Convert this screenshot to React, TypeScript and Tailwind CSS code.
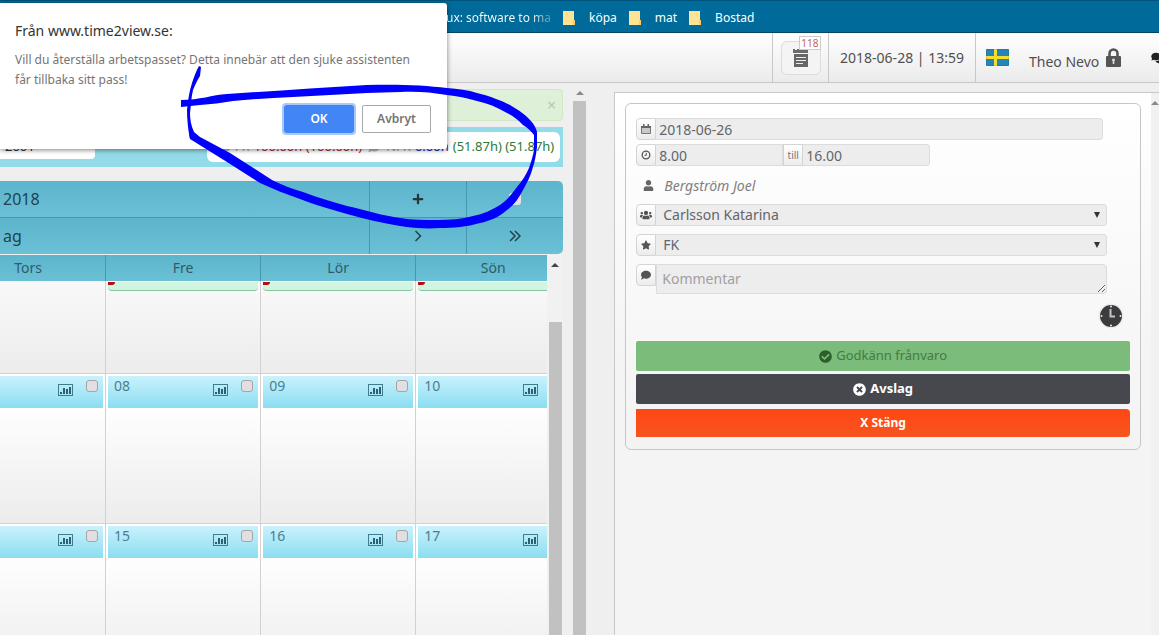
import type { ReactNode } from "react";
import {
  FaPlus, FaUser, FaUsers, FaStar, FaComment, FaComments, FaCheckCircle, FaTimesCircle,
} from "react-icons/fa";

function Folder() {
  return (
    <svg viewBox="0 0 12 14" className="h-[14px] w-3 shrink-0" aria-hidden="true">
      <path d="M0 0H11V9H12V14H0Z" fill="#ffe394" />
      <path d="M10 9H12V14H10Z" fill="#f3cf6d" />
    </svg>
  );
}

function Bookmark({ label }: { label: string }) {
  return (
    <a href="#" className="flex items-center gap-[14px]">
      <Folder />
      {label}
    </a>
  );
}

function Notes() {
  return (
    <svg viewBox="0 0 16 18" className="h-[18px] w-4" aria-hidden="true">
      <path d="M0 0H2V1H4V0H6V1H15V4H0Z" fill="#6b6b6b" />
      <path d="M1 5H15V18H1Z" fill="#666" />
      <path d="M3 8.500H13M3 11.500H13M3 14.500H10" stroke="#eee" strokeWidth="1" />
    </svg>
  );
}

function Flag() {
  return (
    <svg viewBox="0 0 23 17" className="h-[17px] w-[23px] shrink-0" role="img" aria-label="Svenska">
      <rect width="23" height="17" rx="1" fill="#2584b8" />
      <path d="M0 8.500H23M9.500 0V17" stroke="#f7dc2c" strokeWidth="3" />
      <rect width="23" height="17" fill="none" stroke="#000" strokeOpacity=".15" />
    </svg>
  );
}

function Lock() {
  return (
    <svg viewBox="0 0 15 19" className="h-[19px] w-[15px] shrink-0" aria-hidden="true">
      <path d="M3.500 9V5.500A4 4 0 0 1 11.500 5.500V9" fill="none" stroke="#555" strokeWidth="2.600" />
      <rect y="8" width="15" height="11" rx="1" fill="#555" />
      <path d="M6 12A1.500 1.500 0 0 1 9 12L8.300 13.500V16H6.700V13.500Z" fill="#ddd" />
    </svg>
  );
}

function Chart() {
  return (
    <svg viewBox="0 0 15 12" className="h-3 w-[15px]" aria-hidden="true">
      <rect x=".5" y=".5" width="14" height="11" fill="none" stroke="#3f7c8f" />
      <path d="M2 10V8H4V10ZM5 10V4H7V10ZM8 10V5H10V10ZM11 10V3H13V10Z" fill="#2c6072" />
    </svg>
  );
}

function CalendarIcon() {
  return (
    <svg viewBox="0 0 10 10" className="h-2.5 w-2.5" aria-hidden="true">
      <path d="M0 2H2V0H3.500V2H6.500V0H8V2H10V4H0Z" fill="#666" />
      <path d="M.5 4V9.500H9.500V4" fill="#c9c9c9" stroke="#777" />
    </svg>
  );
}

function ClockOutline() {
  return (
    <svg viewBox="0 0 10 10" className="h-2.5 w-2.5" aria-hidden="true">
      <circle cx="5" cy="5" r="3.800" fill="none" stroke="#555" strokeWidth="1.300" />
      <path d="M5.300 2.800V5.300H3.500" fill="none" stroke="#555" />
    </svg>
  );
}

function Chevrons({ double = false }: { double?: boolean }) {
  return (
    <svg viewBox="0 0 12 12" className="h-3 w-3" fill="none" stroke="#22434d" strokeWidth="1.500" aria-hidden="true">
      {double ? <path d="M1 1L6 6L1 11M6 1L11 6L6 11" /> : <path d="M3.500 1L8.500 6L3.500 11" />}
    </svg>
  );
}

function ClockFace() {
  return (
    <svg viewBox="0 0 26 26" className="h-[26px] w-[26px]" aria-hidden="true">
      <circle cx="13" cy="13" r="12.500" fill="#ececec" />
      <circle cx="13" cy="13" r="11" fill="#3b3b3d" />
      <path d="M12.500 6V13.500H17" fill="none" stroke="#c4c4c4" strokeWidth="2" />
      <g fill="#eee">
        <circle cx="13" cy="3.500" r="1" />
        <circle cx="13" cy="22.500" r="1" />
        <circle cx="3.500" cy="13" r="1" />
        <circle cx="22.500" cy="13" r="1" />
      </g>
    </svg>
  );
}

function UpArrow({ color }: { color: string }) {
  return (
    <svg viewBox="0 0 8 4" className="h-1 w-2 shrink-0" aria-hidden="true">
      <path d="M4 0L8 4H0Z" fill={color} />
    </svg>
  );
}

function Marker() {
  return (
    <svg viewBox="0 0 1159 635" className="pointer-events-none absolute top-0 left-0 h-[635px] w-[1159px]" aria-hidden="true">
      <g fill="#0000fb">
        <path d="M181 100C200 100 212 95 227 94C270 91 320 88 367 85C395 84 425 85 447 88C458 89 468 90 477 93C490 96 502 101 510 105C520 111 526 115 530 120C534 124 536 128 537 132V147C536 155 535 161 533 167C531 175 527 183 523 190C519 198 514 205 507 210C499 217 490 221 480 223C467 227 453 228 440 228C427 229 412 228 400 226C382 223 364 219 347 214C331 209 315 205 300 199C286 194 273 189 260 183L227 162L190 139L189 131C192 130 193 131 194 132L200 137L230 153L255 169L272 180C282 185 292 189 303 192C319 198 333 202 347 206C365 210 384 216 400 218C412 220 425 220 437 220C450 220 462 219 473 216C483 214 492 210 500 205C507 200 512 194 517 187C522 181 526 175 529 168C531 162 533 156 534 150V135C531 131 528 128 523 125C518 120 513 116 507 113C497 107 487 103 477 101C467 98 457 96 447 95C431 92 415 91 400 92L367 93L293 97C273 98 252 99 233 101C222 103 211 104 200 105L181 107Z" />
        <path d="M199 66L201 67L200 76C197 81 195 85 193 90C191 98 191 106 190 113C190 119 191 126 194 132L190 139C188 130 187 119 187 110C188 101 189 92 192 83C194 77 196 71 199 66Z" />
      </g>
    </svg>
  );
}

const addon =
  "flex h-[22px] w-5 shrink-0 items-center justify-center rounded-l border border-[#d4d4d4] bg-linear-to-b from-white to-[#ececec] text-[10px] text-[#555]";
const field =
  "block h-[22px] min-w-0 border border-l-0 border-[#dcdcdc] bg-[#ededed] text-[14px] leading-5 text-[#62666b] outline-none";

function SelectRow({ id, icon, label, value }: { id: string; icon: ReactNode; label: string; value: string }) {
  return (
    <div className="mr-[23px] mb-2 flex">
      <label htmlFor={id} aria-label={label} className={addon}>{icon}</label>
      <div className="relative min-w-0 flex-1">
        <select id={id} className={`${field} w-full appearance-none rounded-r pl-[7px]`}>
          <option>{value}</option>
        </select>
        <svg viewBox="0 0 6 6" className="pointer-events-none absolute top-2 right-[7px] h-1.5 w-1.5" aria-hidden="true">
          <path d="M0 0H6L3 6Z" fill="#333" />
        </svg>
      </div>
    </div>
  );
}

function DayCell({ day }: { day: string }) {
  return (
    <td className="border-r border-b border-[#d4cfd0] bg-linear-to-b from-white from-20% to-[#ececec] p-0 align-top">
      <div className="mx-0.5 mt-0.5 flex h-8 items-start bg-linear-to-b from-[#c9f2fd] to-[#8addf1] pr-[5px] pl-1.5">
        <span className="text-[14px] leading-5 text-[#4a7f8f]">{day}</span>
        <span className="mt-2 ml-auto"><Chart /></span>
        <input
          type="checkbox"
          aria-label={`Välj ${day}`}
          className="mt-1 ml-[13px] h-3 w-3 appearance-none rounded-[3px] border border-[#a3a5a8] bg-[#e2dee1]"
        />
      </div>
    </td>
  );
}

function Calendar() {
  return (
    <table className="-ml-[49px] w-[calc(100%+73px)] table-fixed border-separate border-spacing-0">
      <thead>
        <tr className="h-[26px] bg-linear-to-b from-[#5cb5cc] to-[#6bc0d5]">
          {["Tors", "Fre", "Lör", "Sön"].map((d) => (
            <th key={d} className="border-r border-[#4698ae] p-0 text-[14px] leading-5 font-normal text-[#2f5b69]">{d}</th>
          ))}
        </tr>
      </thead>
      <tbody>
        <tr className="h-[93px]">
          {[false, true, true, true].map((event, i) => (
            <td key={i} className="border-r border-b border-[#d4cfd0] bg-linear-to-b from-[#f9f9f9] to-[#ececec] p-0 align-top">
              {event && (
                <div className="mx-0.5 mt-px h-[9px] rounded-b-sm border-b border-[#8cc4a0] bg-[#d1f5e0]">
                  <div className="h-[3px] w-[7px] rounded-br bg-[#b80d12]" />
                </div>
              )}
            </td>
          ))}
        </tr>
        <tr className="h-[150px]">
          {["", "08", "09", "10"].map((d) => <DayCell key={d} day={d} />)}
        </tr>
        <tr className="h-[150px]">
          {["", "15", "16", "17"].map((d) => <DayCell key={d} day={d} />)}
        </tr>
      </tbody>
    </table>
  );
}

function NavRow({ text, first, second }: { text: string; first: ReactNode; second: ReactNode }) {
  return (
    <div className="flex h-9 bg-linear-to-b from-[#5cb5cc] to-[#6bc0d5] text-[#22434d]">
      <div className="flex flex-1 items-center pl-[3px] text-[16px]">{text}</div>
      <div className="flex w-[97px] items-center justify-center border-l border-[#4698ae]">{first}</div>
      <div className="flex w-[97px] items-center justify-center border-l border-[#4698ae]">{second}</div>
    </div>
  );
}

function Schedule() {
  return (
    <div className="flex min-w-0 flex-1 flex-col">
      <div className="mt-1.5 flex h-8 items-center justify-end rounded border border-[#d0e8c4] bg-[#dff0d8] pr-1.5">
        <button aria-label="Stäng meddelande" className="text-[16px] leading-4 text-[#b5c9af]">×</button>
      </div>
      <div className="mt-1.5 flex h-10 items-start justify-between bg-[#93dbe9] pr-[3px]">
        <div className="h-8 w-[95px] rounded-br bg-white pt-[9px] pl-[5px] text-[13px] leading-5 text-[#333]">2001</div>
        <div className="mt-[5px] flex h-[30px] items-center rounded-md bg-white pr-1.5 pl-3 text-[13px]">
          <FaComment className="mr-1 h-3 w-3 text-[#bbb]" />
          <span className="mr-1 text-[#aaa]">FR</span>
          <span className="text-[#b0283a]">100.00h (100.00h)</span>
          <FaComment className="mx-1.5 h-3 w-3 text-[#bbb]" />
          <span className="mr-1 text-[#aaa]">NFR</span>
          <span className="mr-1 text-[#2525b5]">0.00h</span>
          <span className="text-[#2c7a35]">(51.87h) (51.87h)</span>
        </div>
      </div>
      <div className="mt-3.5 overflow-hidden rounded-r-[5px]">
        <NavRow
          text="2018"
          first={<button aria-label="Lägg till" className="text-[#2b3438]"><FaPlus className="h-3 w-3" /></button>}
          second={<input type="checkbox" aria-label="Välj alla" className="h-3 w-3 appearance-none rounded-[3px] bg-[#e4e1e3]" />}
        />
        <div className="h-px bg-[#4698ae]" />
        <NavRow
          text="ag"
          first={<button aria-label="Nästa"><Chevrons /></button>}
          second={<button aria-label="Sista"><Chevrons double /></button>}
        />
      </div>
      <div className="mt-px flex min-h-0 flex-1">
        <div className="min-w-0 flex-1 overflow-hidden"><Calendar /></div>
        <div className="flex w-4 flex-col items-center bg-[#f1f1f1] pt-2">
          <UpArrow color="#444" />
          <div className="mt-[55px] w-[13px] flex-1 bg-[#c1c1c1]" />
        </div>
      </div>
    </div>
  );
}

function ShiftForm() {
  return (
    <form className="rounded-md border border-[#c6c6c6] bg-linear-to-b from-white to-[#f3f3f3] px-2.5 pt-3.5 pb-3">
      <div className="mr-[27px] flex">
        <label htmlFor="date" aria-label="Datum" className={addon}><CalendarIcon /></label>
        <input id="date" defaultValue="2018-06-26" className={`${field} flex-1 rounded-r pl-[3px]`} />
      </div>
      <div className="mt-1 flex">
        <label htmlFor="from" aria-label="Från" className={addon}><ClockOutline /></label>
        <input id="from" defaultValue="8.00" className={`${field} w-[127px] pl-[3px]`} />
        <label htmlFor="to" className="flex h-[22px] w-5 items-center justify-center border border-[#d4d4d4] bg-linear-to-b from-white to-[#ececec] text-[10px] text-[#777]">till</label>
        <input id="to" defaultValue="16.00" className={`${field} w-[127px] rounded-r pl-[3px]`} />
      </div>
      <div className="flex h-[38px] items-center gap-2.5 pl-[7px] text-[14px] text-[#808080] italic">
        <FaUser className="h-[11px] w-[11px] text-[#666]" />
        Bergström Joel
      </div>
      <SelectRow id="assistant" label="Assistent" icon={<FaUsers className="h-3 w-3" />} value="Carlsson Katarina" />
      <SelectRow id="type" label="Typ" icon={<FaStar />} value="FK" />
      <div className="mr-[23px] flex items-start">
        <label htmlFor="comment" aria-label="Kommentar" className={addon}><FaComment /></label>
        <textarea
          id="comment"
          placeholder="Kommentar"
          className="block h-[30px] min-w-0 flex-1 overflow-hidden rounded-r border border-[#dcdcdc] bg-[#ededed] px-[5px] py-1 text-[14px] leading-5 text-[#555] placeholder:text-[#a0a0a0]"
        />
      </div>
      <div className="mt-[9px] flex justify-end pr-1.5">
        <button type="button" aria-label="Tid"><ClockFace /></button>
      </div>
      <button type="button" className="mt-3 flex h-[30px] w-full items-center justify-center gap-1 rounded-xs bg-[#7bbc7b] text-[13px] text-[#447a44]">
        <FaCheckCircle className="h-[13px] w-[13px] text-[#2d5f2c]" />
        Godkänn frånvaro
      </button>
      <button type="button" className="mt-[3px] flex h-[30px] w-full items-center justify-center gap-1 rounded-xs bg-[#46484e] text-[13px] font-bold text-white">
        <FaTimesCircle className="h-[13px] w-[13px]" />
        Avslag
      </button>
      <button type="button" className="mt-[5px] h-7 w-full rounded-r bg-linear-to-b from-[#ff4714] to-[#f7541e] text-[12px] font-bold text-white">
        X Stäng
      </button>
    </form>
  );
}

function ConfirmDialog() {
  return (
    <div role="dialog" aria-label="Bekräfta" className="absolute top-[3px] left-0 w-[447px] rounded-r-[3px] bg-white px-4 pt-[17px] pb-4 pl-[15px] shadow-[0_1px_5px_rgba(0,0,0,0.5)]">
      <h1 className="text-[14px] leading-[22px] text-[#333]">Från www.time2view.se:</h1>
      <p className="mt-2 text-[12px] leading-5 text-[#757575]">
        Vill du återställa arbetspasset? Detta innebär att den sjuke assistenten
        <br />
        får tillbaka sitt pass!
      </p>
      <div className="mt-[15px] flex justify-end gap-2 text-[12px] font-semibold">
        <button className="h-7 w-[70px] rounded-xs bg-[#4285f4] text-white outline-2 outline-[#a9c9fb]">OK</button>
        <button className="h-7 w-[69px] rounded-xs border border-[#a8a8a8] bg-white text-[#737373]">Avbryt</button>
      </div>
    </div>
  );
}

export default function App() {
  return (
    <div className="relative flex h-screen min-h-[480px] flex-col overflow-hidden bg-[#efefef] font-['Noto_Sans',sans-serif]">
      <nav className="flex h-[33px] shrink-0 items-center gap-3 border-t border-b border-t-[#00557c] border-b-[#004767] bg-[#006b9a] pt-0.5 pl-[446px] text-[12px] text-white">
        <a href="#" className="bg-linear-to-r from-white from-80% to-[#3d8fb3] bg-clip-text whitespace-nowrap text-transparent">ux: software to ma</a>
        <Bookmark label="köpa" />
        <Bookmark label="mat" />
        <Bookmark label="Bostad" />
      </nav>
      <header className="flex h-[50px] shrink-0 justify-end overflow-hidden border-b border-[#c8c8c8] bg-linear-to-b from-white to-[#ebebeb] text-[#505050]">
        <div className="flex w-14 items-center justify-center border-l border-[#c8c8c8]">
          <button aria-label="Meddelanden" className="relative flex h-[34px] w-10 items-center justify-center rounded-md border border-[#dcdcdc] bg-[#f4f4f4]">
            <Notes />
            <span className="absolute -top-[6px] -right-px border border-[#ccc] bg-white px-px text-[10px] leading-3 text-[#c86060]">118</span>
          </button>
        </div>
        <div className="flex w-[147px] items-center justify-center border-l border-[#c8c8c8] text-[14px]">2018-06-28 | 13:59</div>
        <div className="flex w-[184px] items-center border-l border-[#c8c8c8] pl-2.5">
          <Flag />
          <span className="ml-5 pt-2 text-[14px] whitespace-nowrap">Theo Nevo</span>
          <span className="ml-[7px]"><Lock /></span>
          <FaComments className="ml-[29px] h-3 w-4 shrink-0 text-[#222]" />
        </div>
      </header>
      <main className="flex min-h-0 flex-1">
        <section className="flex w-[53%] min-w-0 pr-7">
          <Schedule />
          <div className="ml-2.5 flex w-[13px] flex-col items-center pt-2">
            <UpArrow color="#888" />
            <div className="mt-1.5 w-full flex-1 bg-[#c1c1c1]" />
          </div>
        </section>
        <aside className="mt-[9px] flex min-w-0 flex-1 border-t border-l border-[#c8c8c8] bg-linear-to-b from-white via-[#f4f4f4] to-[#f4f4f4]">
          <div className="min-w-0 flex-1 p-2.5"><ShiftForm /></div>
          <div className="flex w-2 flex-col items-end overflow-hidden bg-[#f1f1f1] pt-2"><UpArrow color="#888" /></div>
        </aside>
      </main>
      <ConfirmDialog />
      <Marker />
    </div>
  );
}
